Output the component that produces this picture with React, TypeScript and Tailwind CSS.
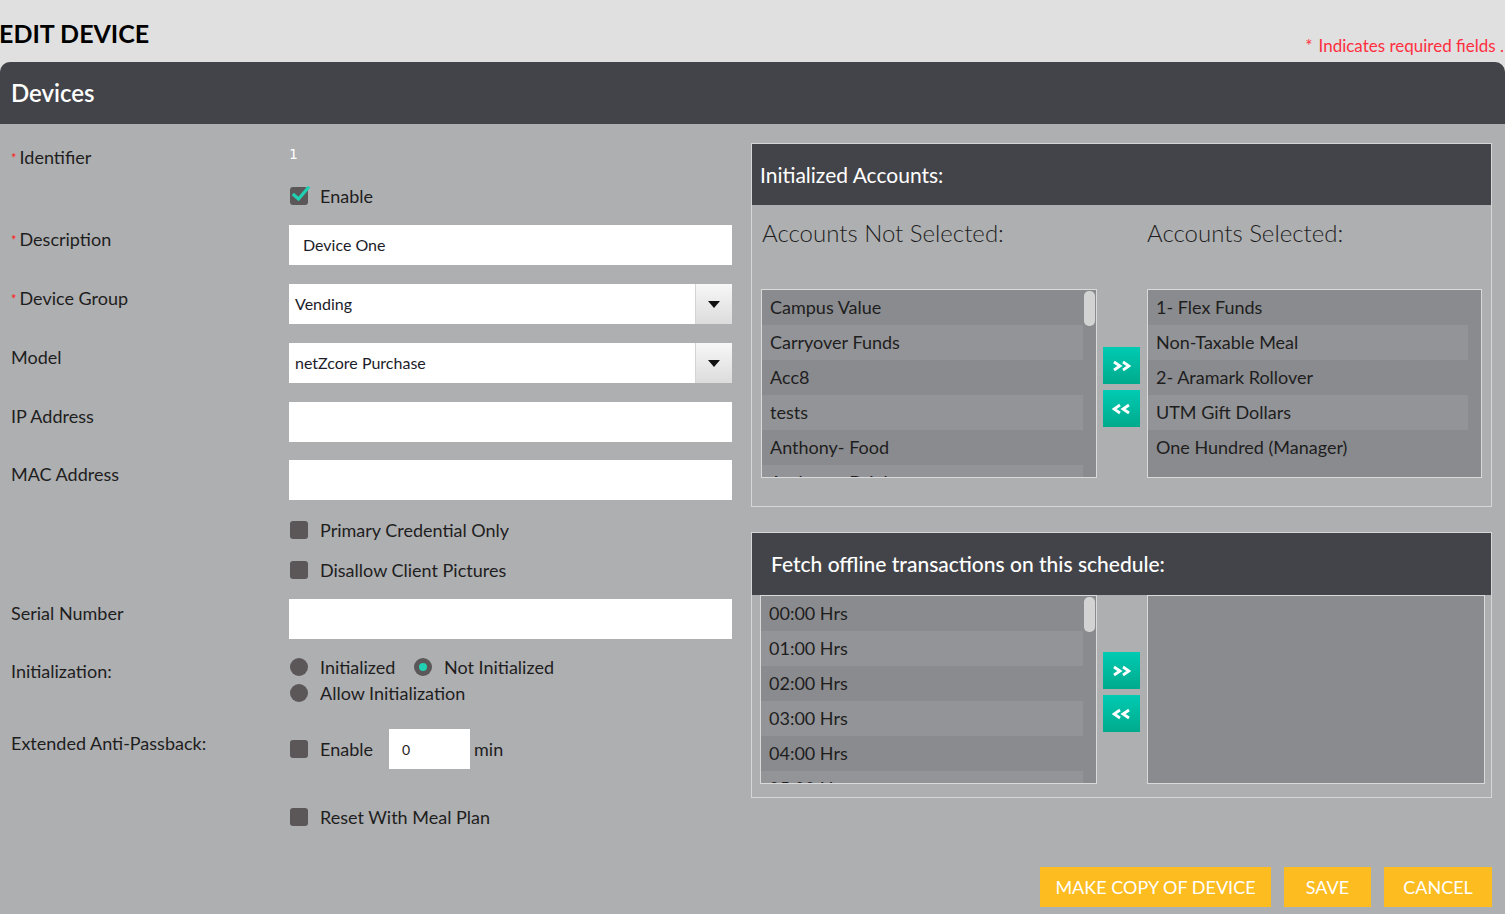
import React from "react";

const NOT_SELECTED = ["Campus Value", "Carryover Funds", "Acc8", "tests", "Anthony- Food", "Anthony- Drink"];
const SELECTED = ["1- Flex Funds", "Non-Taxable Meal", "2- Aramark Rollover", "UTM Gift Dollars", "One Hundred (Manager)"];
const HOURS = ["00:00 Hrs", "01:00 Hrs", "02:00 Hrs", "03:00 Hrs", "04:00 Hrs", "05:00 Hrs"];

function Req() {
  return <span className="text-[#ff1a1a] text-[13px] mr-[3px] relative top-[1px] align-top">*</span>;
}

function Check({ checked }: { checked?: boolean }) {
  return (
    <span className="relative w-[18px] h-[18px] rounded-[3px] bg-[#5b5758] shrink-0">
      {checked && (
        <svg className="absolute left-[1px] top-[-3px]" width="20" height="20" viewBox="0 0 20 20" aria-hidden>
          <path d="M3 11 L7.5 15 L17 4" fill="none" stroke="#1fd1b2" strokeWidth={3.2} strokeLinecap="square" />
        </svg>
      )}
    </span>
  );
}

function Radio({ checked }: { checked?: boolean }) {
  return (
    <span className="w-[18px] h-[18px] rounded-full bg-[#5b5758] shrink-0 flex items-center justify-center">
      {checked && <span className="w-[8px] h-[8px] rounded-full bg-[#1fd1b2]" />}
    </span>
  );
}

// label column: text starts at x=11, controls at x=289
function Field({ label, req, children, className }: { label: string; req?: boolean; children?: React.ReactNode; className: string }) {
  return (
    <div className={`flex ${className}`}>
      <div className="w-[289px] pl-[11px] pt-[3px] shrink-0 text-[18px] leading-[22px] text-[#1e1e1e]">
        {req && <Req />}
        {label}
      </div>
      <div className="w-[443px] flex items-center">{children}</div>
    </div>
  );
}

function CheckRow({ label, checked, className }: { label: string; checked?: boolean; className: string }) {
  return (
    <div className={`flex items-center pl-[290px] gap-[12px] text-[18px] text-[#1e1e1e] ${className}`}>
      <Check checked={checked} /> {label}
    </div>
  );
}

function Select({ value }: { value: string }) {
  return (
    <div className="w-full h-full bg-white flex items-center">
      <span className="flex-1 pl-[6px] text-[16px] text-[#1c1c2a]">{value}</span>
      <span className="w-[37px] h-full border-l border-[#d4d4d4] bg-linear-to-b from-[#f7f7f7] to-[#dcdcdc] flex items-center justify-center">
        <svg width="12" height="7" viewBox="0 0 12 7" aria-hidden>
          <path d="M0 0 H12 L6 7 Z" fill="#111" />
        </svg>
      </span>
    </div>
  );
}

function ListBox({ items, className, thumb }: { items: string[]; className: string; thumb?: boolean }) {
  return (
    <div className={`relative overflow-hidden border border-[#dadada] bg-[#8a8b8e] shrink-0 ${className}`}>
      {items.map((it, i) => (
        <div
          key={it}
          className={`h-[35px] w-[calc(100%-13px)] flex items-center pl-[8px] text-[18px] text-[#1e1e1e] ${i % 2 ? "bg-[#939497]" : ""}`}
        >
          {it}
        </div>
      ))}
      {thumb && <div className="absolute right-[1px] top-[1px] w-[11px] h-[35px] rounded-[5px] bg-[#d3d3d3]" />}
    </div>
  );
}

function Chevrons({ dir }: { dir: "right" | "left" }) {
  const d = dir === "right" ? "M2 2 L8 6 L2 10 M11 2 L17 6 L11 10" : "M8 2 L2 6 L8 10 M17 2 L11 6 L17 10";
  return (
    <span className="w-[37px] h-[37px] bg-linear-to-b from-[#00cbb3] to-[#00aa8c] flex items-center justify-center">
      <svg width="19" height="12" viewBox="0 0 19 12" aria-hidden>
        <path d={d} fill="none" stroke="#fff" strokeWidth={2.8} />
      </svg>
    </span>
  );
}

function MoveButtons({ className }: { className: string }) {
  return (
    <div className={`flex flex-col gap-[6px] shrink-0 ${className}`}>
      <Chevrons dir="right" />
      <Chevrons dir="left" />
    </div>
  );
}

export default function App() {
  return (
    <div className="w-[1505px] h-[914px] flex flex-col overflow-hidden bg-[#e0e0e0] font-['Lato','Open_Sans',sans-serif]">
      {/* top strip */}
      <div className="h-[62px] shrink-0 flex justify-between">
        <h1 className="ml-[-1px] mt-[18px] text-[25px] font-bold text-black leading-[30px]">EDIT DEVICE</h1>
        <div className="mt-[36px] mr-[1px] text-[17px] text-[#ff2f3f] leading-[20px] whitespace-nowrap">
          <span className="mr-[6px]">*</span>Indicates required fields .
        </div>
      </div>

      <div className="flex-1 flex flex-col rounded-t-[10px] overflow-hidden bg-[#aeafb1]">
        <div className="h-[62px] shrink-0 bg-[#434449] flex items-center pl-[11px] text-white text-[24px] font-semibold">
          Devices
        </div>

        <div className="flex">
          {/* left form */}
          <div className="w-[751px] shrink-0 flex flex-col">
            <div className="flex mt-[18px] h-[30px]">
              <div className="w-[289px] pl-[11px] pt-[4px] text-[18px] leading-[22px] text-[#1e1e1e]">
                <Req />
                Identifier
              </div>
              <div className="text-white text-[14px] font-['DejaVu_Sans_Mono',monospace] mt-[2px]">1</div>
            </div>
            <CheckRow label="Enable" checked className="mt-[9px] h-[30px]" />
            <Field label="Description" req className="mt-[14px] h-[40px]">
              <div className="w-full h-full bg-white flex items-center pl-[14px] text-[16px] text-[#1c1c2a]">Device One</div>
            </Field>
            <Field label="Device Group" req className="mt-[19px] h-[40px]">
              <Select value="Vending" />
            </Field>
            <Field label="Model" className="mt-[19px] h-[40px]">
              <Select value="netZcore Purchase" />
            </Field>
            <Field label="IP Address" className="mt-[19px] h-[40px]">
              <div className="w-full h-full bg-white" />
            </Field>
            <Field label="MAC Address" className="mt-[18px] h-[40px]">
              <div className="w-full h-full bg-white" />
            </Field>
            <CheckRow label="Primary Credential Only" className="mt-[15px] h-[30px]" />
            <CheckRow label="Disallow Client Pictures" className="mt-[10px] h-[30px]" />
            <Field label="Serial Number" className="mt-[14px] h-[40px]">
              <div className="w-full h-full bg-white" />
            </Field>
            <div className="flex mt-[15px] h-[52px]">
              <div className="w-[289px] pl-[11px] pt-[6px] text-[18px] leading-[22px] text-[#1e1e1e]">Initialization:</div>
              <div className="flex flex-col text-[18px] text-[#1e1e1e]">
                <div className="h-[26px] flex items-center ml-[1px]">
                  <Radio />
                  <span className="ml-[12px] w-[94px]">Initialized</span>
                  <Radio checked />
                  <span className="ml-[12px]">Not Initialized</span>
                </div>
                <div className="h-[26px] flex items-center ml-[1px]">
                  <Radio />
                  <span className="ml-[12px]">Allow Initialization</span>
                </div>
              </div>
            </div>
            <div className="flex mt-[23px] h-[40px]">
              <div className="w-[289px] pl-[11px] pt-[3px] text-[18px] leading-[22px] text-[#1e1e1e]">Extended Anti-Passback:</div>
              <div className="flex items-center text-[18px] text-[#1e1e1e] ml-[1px]">
                <Check />
                <span className="ml-[12px] w-[69px]">Enable</span>
                <span className="w-[81px] h-[40px] bg-white flex items-center pl-[13px] text-[14px] text-[#222]">0</span>
                <span className="ml-[4px]">min</span>
              </div>
            </div>
            <CheckRow label="Reset With Meal Plan" className="mt-[33px] h-[30px]" />
          </div>

          {/* right panels */}
          <div className="w-[741px] shrink-0 flex flex-col">
            <div className="mt-[19px] border border-[#d6d6d6]">
              <div className="h-[61px] bg-[#434449] flex items-center pl-[8px] text-white text-[21px]">Initialized Accounts:</div>
              <div className="pl-[9px] pb-[28px]">
                <div className="h-[84px] flex pt-[10px] text-[24px] text-[#1e1e1e] font-light">
                  <span className="w-[386px] pl-[1px]">Accounts Not Selected:</span>
                  <span>Accounts Selected:</span>
                </div>
                <div className="flex items-start">
                  <ListBox items={NOT_SELECTED} thumb className="w-[336px] h-[189px]" />
                  <MoveButtons className="ml-[6px] mt-[58px]" />
                  <ListBox items={SELECTED} className="ml-[7px] w-[335px] h-[189px]" />
                </div>
              </div>
            </div>

            <div className="mt-[25px] border border-[#d6d6d6]">
              <div className="h-[62px] bg-[#434449] flex items-center pl-[19px] text-white text-[21px] font-medium">
                Fetch offline transactions on this schedule:
              </div>
              <div className="pl-[8px] pb-[13px] flex items-start">
                <ListBox items={HOURS} thumb className="w-[337px] h-[189px]" />
                <MoveButtons className="ml-[6px] mt-[57px]" />
                <ListBox items={[]} className="ml-[7px] w-[338px] h-[189px]" />
              </div>
            </div>
          </div>
        </div>

        <div className="mt-[35px] flex justify-end gap-[13px] pr-[13px]">
          <button className="w-[231px] h-[40px] bg-[#fdbc1f] text-white text-[18px]">MAKE COPY OF DEVICE</button>
          <button className="w-[87px] h-[40px] bg-[#fdbc1f] text-white text-[18px]">SAVE</button>
          <button className="w-[108px] h-[40px] bg-[#fdbc1f] text-white text-[18px]">CANCEL</button>
        </div>
      </div>
    </div>
  );
}
